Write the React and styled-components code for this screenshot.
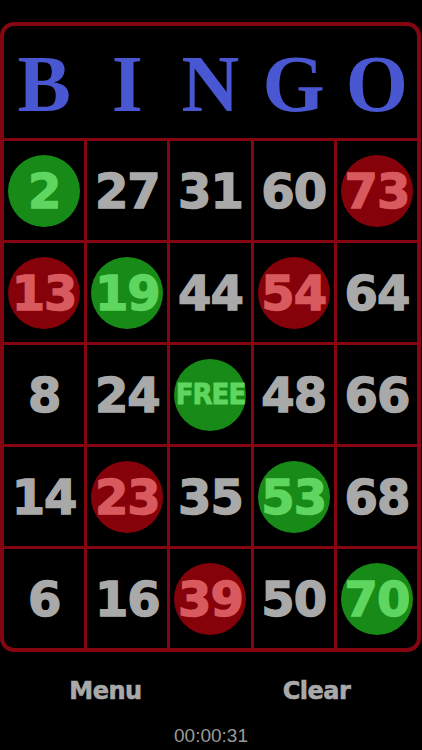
import React from 'react';
import styled, { createGlobalStyle } from 'styled-components';

const GlobalStyle = createGlobalStyle`
  html, body {
    margin: 0;
    padding: 0;
    background: #000;
  }
`;

const Screen = styled.div`
  width: 422px;
  height: 750px;
  background: #000;
  padding-top: 22px;
  box-sizing: border-box;
  display: flex;
  flex-direction: column;
`;

const Card = styled.div`
  width: 421px;
  box-sizing: border-box;
  border: 4px solid #850610;
  border-radius: 14px;
  overflow: hidden;
  background: #850610;
`;

const Header = styled.div`
  height: 112px;
  display: grid;
  grid-template-columns: repeat(5, 1fr);
  column-gap: 3px;
  align-items: center;
  background: #000;
  border-bottom: 3px solid #850610;
`;

const Letter = styled.div`
  text-align: center;
  font-family: "Liberation Serif", "Times New Roman", serif;
  font-weight: bold;
  font-size: 80px;
  line-height: 1;
  color: #4a57d2;
  padding-top: 4px;
`;

const Grid = styled.div`
  display: grid;
  grid-template-columns: repeat(5, 1fr);
  grid-template-rows: repeat(5, 99px);
  gap: 3px;
`;

const Cell = styled.div`
  background: #000;
  display: flex;
  align-items: center;
  justify-content: center;
`;

const tones = {
  none: { bg: 'transparent', fg: '#a9a9a9' },
  green: { bg: '#178a17', fg: '#5fd65f' },
  red: { bg: '#86020a', fg: '#d95a5e' },
};

const Ball = styled.div`
  width: 72px;
  height: 72px;
  border-radius: 50%;
  background: ${(props) => tones[props.$tone].bg};
  color: ${(props) => tones[props.$tone].fg};
  -webkit-text-stroke: ${(props) => (props.$free ? '0.8px' : '1.4px')} ${(props) => tones[props.$tone].fg};
  display: flex;
  align-items: center;
  justify-content: center;
  font-family: ${(props) => (props.$free ? '"DejaVu Sans Condensed", "DejaVu Sans"' : '"DejaVu Sans"')}, sans-serif;
  font-weight: bold;
  font-size: ${(props) => (props.$free ? '29px' : '48px')};
  letter-spacing: -1px;
  line-height: 1;
  white-space: nowrap;
`;

const Footer = styled.div`
  display: grid;
  grid-template-columns: 1fr 1fr;
  padding-top: 25px;
`;

const FooterButton = styled.button`
  background: none;
  border: none;
  padding: 0;
  font-family: "DejaVu Sans", sans-serif;
  font-weight: bold;
  font-size: 24px;
  color: #a9a9a9;
  -webkit-text-stroke: 0.6px #a9a9a9;
  text-align: center;
  letter-spacing: -0.5px;
`;

const Timer = styled.div`
  margin-top: 20px;
  text-align: center;
  font-family: "Liberation Sans", Arial, sans-serif;
  font-size: 19px;
  color: #9a9a9a;
`;

const board = [
  [[2, 'green'], [27], [31], [60], [73, 'red']],
  [[13, 'red'], [19, 'green'], [44], [54, 'red'], [64]],
  [[8], [24], ['FREE', 'green'], [48], [66]],
  [[14], [23, 'red'], [35], [53, 'green'], [68]],
  [[6], [16], [39, 'red'], [50], [70, 'green']],
];

const App = () => (
  <>
    <GlobalStyle />
    <Screen>
      <Card>
        <Header>
          {'BINGO'.split('').map((ch) => (
            <Letter key={ch}>{ch}</Letter>
          ))}
        </Header>
        <Grid>
          {board.flat().map(([value, tone = 'none']) => (
            <Cell key={value}>
              <Ball $tone={tone} $free={value === 'FREE'}>{value}</Ball>
            </Cell>
          ))}
        </Grid>
      </Card>
      <Footer>
        <FooterButton>Menu</FooterButton>
        <FooterButton>Clear</FooterButton>
      </Footer>
      <Timer>00:00:31</Timer>
    </Screen>
  </>
);

export default App;
